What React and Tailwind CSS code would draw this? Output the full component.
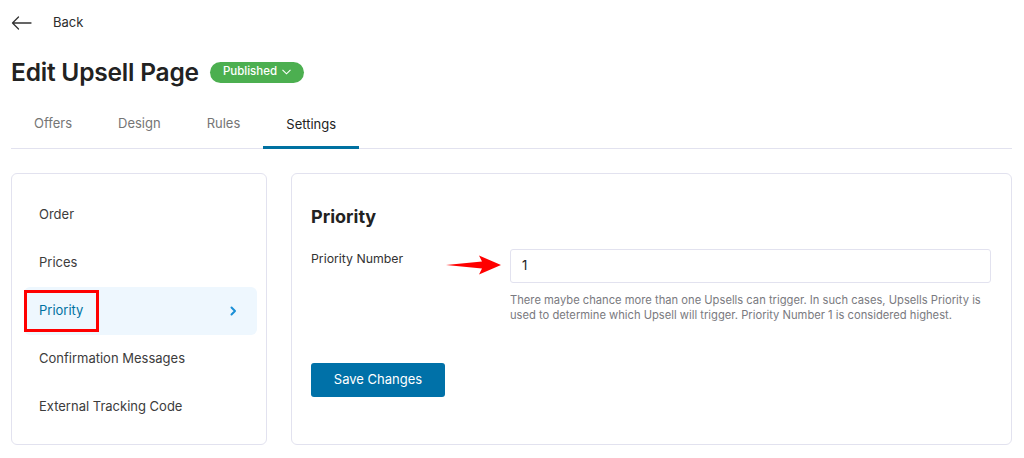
import React from "react";

export default function App() {
  const items = ["Order", "Prices", "Priority", "Confirmation Messages", "External Tracking Code"];
  return (
    <div className="w-[1024px] h-[458px] bg-white pl-[11px] pr-[12px] overflow-hidden" style={{ fontFamily: "Inter, 'Noto Sans', sans-serif" }}>
      {/* Back */}
      <div className="flex items-center h-[44px] pt-[1px]">
        <svg width="21" height="14" viewBox="0 0 21 14" fill="none" stroke="#333" strokeWidth="1.3" strokeLinecap="round" strokeLinejoin="round">
          <path d="M20 7H1.5M7.5 1L1.5 7l6 6" />
        </svg>
        <span className="ml-[21px] text-[13px] text-[#2c2c2c]">Back</span>
      </div>
      {/* Title */}
      <div className="flex items-center h-[56px]">
        <h1 className="text-[24.5px] font-semibold text-[#222] tracking-[-0.2px]">Edit Upsell Page</h1>
        <div className="ml-[11px] h-[21px] px-[13px] rounded-full bg-[#4caf50] flex items-center gap-[5px] text-white text-[11.5px] font-medium">
          Published
          <svg width="9" height="6" viewBox="0 0 9 6" fill="none" stroke="white" strokeWidth="1.1">
            <path d="M0.5 0.8L4.5 4.8L8.5 0.8" />
          </svg>
        </div>
      </div>
      {/* Tabs */}
      <div className="flex border-b border-[#e2e2ef] h-[49px]">
        {["Offers", "Design", "Rules", "Settings"].map((t, i) => (
          <div
            key={t}
            className={`flex items-center px-[23px] text-[13px] pb-[1px] ${i === 3 ? "text-[#222] border-b-[3px] border-[#0071a1] -mb-[1px] pt-[4px]" : "text-[#757575]"}`}
          >
            {t}
          </div>
        ))}
      </div>
      {/* Body */}
      <div className="flex gap-[24px] mt-[24px]">
        <div className="w-[256px] h-[272px] border border-[#e2e2ef] rounded-[6px] pt-[17px] pl-[12px] pr-[9px]">
          {items.map((it) => {
            const active = it === "Priority";
            return (
              <div
                key={it}
                className={`relative h-[48px] flex items-center justify-between pl-[15px] pr-[20px] rounded-[6px] text-[13px] ${active ? "bg-[#eef7fe] text-[#0071a1]" : "text-[#3c3c3c]"}`}
              >
                <span>{it}</span>
                {active && (
                  <svg width="7" height="10" viewBox="0 0 7 10" fill="none" stroke="#1a8fd6" strokeWidth="2" strokeLinecap="round" strokeLinejoin="round">
                    <path d="M1.5 1.5L5 5L1.5 8.5" />
                  </svg>
                )}
                {active && (
                  <div className="absolute left-0 top-[3px] w-[75px] h-[42px] border-[3px] border-[#ff0000]" />
                )}
              </div>
            );
          })}
        </div>
        <div className="flex-1 h-[272px] border border-[#e2e2ef] rounded-[6px] pl-[19px] pr-[20px] pt-[30px]">
          <h2 className="text-[18px] font-bold text-[#222] leading-[26px]">Priority</h2>
          <div className="flex mt-[20px]">
            <div className="w-[135px] text-[12.3px] text-[#333] leading-[17px]">Priority Number</div>
            <div className="w-[64px] flex items-start pt-[5px]">
              <svg width="56" height="20" viewBox="0 0 56 20">
                <path d="M0 10 L36 6.5 L33 0.5 L55 10 L33 19.5 L36 13.5 Z" fill="#ff0000" />
              </svg>
            </div>
            <div className="flex-1">
              <div className="h-[34px] -mt-[1px] border border-[#e2e2ef] rounded-[3px] flex items-center px-[11px] text-[13px] text-[#222]">1</div>
              <p className="mt-[10px] text-[11.2px] leading-[15px] text-[#7a7a80]">
                There maybe chance more than one Upsells can trigger. In such cases, Upsells Priority is used to determine which Upsell will trigger. Priority Number 1 is considered highest.
              </p>
            </div>
          </div>
          <button className="mt-[40px] w-[134px] h-[34px] bg-[#0071a8] rounded-[3px] text-white text-[13px]">Save Changes</button>
        </div>
      </div>
    </div>
  );
}
